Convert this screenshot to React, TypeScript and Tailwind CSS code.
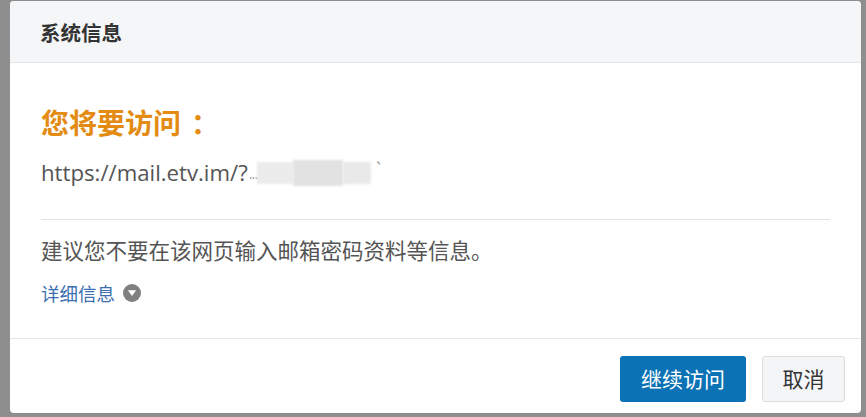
import React from "react";

const cjk = { fontFamily: '"Noto Sans CJK SC", "Noto Sans", sans-serif' };

export default function App() {
  return (
    <div className="w-[866px] h-[417px] bg-[#8e8e8e] pl-[10px] pr-[5px] pt-[1px] pb-[4px]" style={cjk}>
      <div className="h-full bg-white rounded-[4px] flex flex-col overflow-hidden">
        <div className="h-[62px] shrink-0 bg-[#f5f6f8] border-b border-[#e6e6e6] flex items-center pl-[30px]">
          <span className="text-[20.5px] leading-[28px] font-bold text-[#333]">系统信息</span>
        </div>

        <div className="flex-1 pl-[31px] pr-[31px] pt-[41px]">
          <div className="text-[28px] leading-[36px] font-bold text-[#e48b13]">
            您将要访问<span className="ml-[10px]">：</span>
          </div>
          <div className="mt-[19px] flex items-center h-[28px] text-[22.2px] text-[#555]">
            <span style={{ fontFamily: '"Open Sans", "Noto Sans", sans-serif' }}>https://mail.etv.im/?</span>
            <div className="flex items-center ml-[1px]">
              <span className="text-[#aaa] text-[14px] tracking-[-1px] blur-[0.5px]">...</span>
              <div className="w-[36px] h-[22px] bg-[#ececec] blur-[1px]" />
              <div className="w-[50px] h-[26px] bg-[#e2e2e2] blur-[1px]" />
              <div className="w-[28px] h-[22px] bg-[#e9e9e9] blur-[1px]" />
              <span className="text-[#999] ml-[3px] text-[16px] -mt-[10px]">`</span>
            </div>
          </div>
          <div className="mt-[32px] h-px bg-[#e3e3e3]" />
          <div className="mt-[15px] text-[21.5px] leading-[30px] text-[#555]">
            建议您不要在该网页输入邮箱密码资料等信息。
          </div>
          <div className="mt-[14px] flex items-center gap-[8px] text-[18.5px] leading-[28px] text-[#3c6fb0]">
            <span>详细信息</span>
            <svg width="18" height="18" viewBox="0 0 16 16">
              <circle cx="8" cy="8" r="8" fill="#808080" />
              <path d="M4.3 5.6 L11.7 5.6 L8 10.6 Z" fill="#fff" />
            </svg>
          </div>
        </div>

        <div className="h-[75px] shrink-0 border-t border-[#e6e6e6] flex justify-end items-start pt-[17px] pr-[16px] gap-[16px]">
          <button className="w-[126px] h-[46px] rounded-[3px] bg-[#0b72b5] text-white text-[21px]">继续访问</button>
          <button className="w-[83px] h-[46px] rounded-[3px] bg-[#f4f5f7] border border-[#dcdcdc] text-[#333] text-[21px]">取消</button>
        </div>
      </div>
    </div>
  );
}
